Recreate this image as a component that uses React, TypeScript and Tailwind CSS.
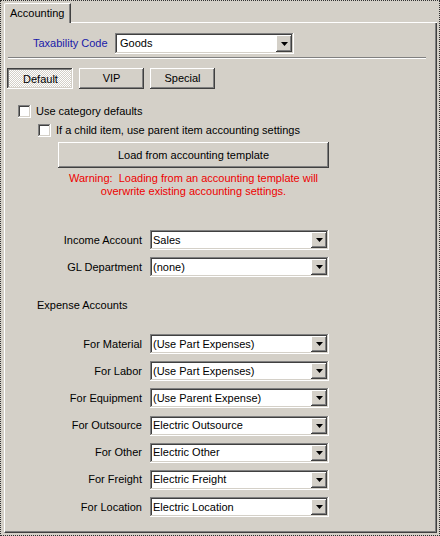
import React from "react";

const raised =
  "shadow-[inset_-1px_-1px_#404040,inset_1px_1px_#ffffff,inset_-2px_-2px_#808080,inset_2px_2px_#d4d0c8]";
const sunken =
  "shadow-[inset_-1px_-1px_#ffffff,inset_1px_1px_#808080,inset_-2px_-2px_#d4d0c8,inset_2px_2px_#404040]";

interface ComboProps {
  value: string;
  tall?: boolean;
}

const Combo: React.FC<ComboProps> = ({ value, tall }) => {
  return (
    <div
      className={`${sunken} bg-white flex items-stretch p-[2px] w-[179px] ${
        tall ? "h-[21px]" : "h-[20px]"
      }`}
    >
      <div className={`flex-1 flex items-center ${tall ? "pl-[3px]" : "pl-[1px]"} leading-none`}>
        {value}
      </div>
      {/* drop arrow */}
      <div className={`${raised} bg-[#d4d0c8] w-[16px] flex items-center justify-center`}>
        <svg width="7" height="4" viewBox="0 0 7 4">
          <polygon points="0,0 7,0 3.5,4" fill="#000" />
        </svg>
      </div>
    </div>
  );
};

const Check: React.FC<{ label: string; className: string }> = ({ label, className }) => (
  <div className={`flex items-center gap-[5px] ${className}`}>
    <div className={`${sunken} bg-white w-[13px] h-[13px]`} />
    <span className="leading-none">{label}</span>
  </div>
);

const Row: React.FC<{ label: string; value: string }> = ({ label, value }) => (
  <div className="flex items-center gap-[8px]">
    <div className="w-[137px] text-right leading-none">{label}</div>
    <Combo value={value} />
  </div>
);

const expenses = [
  ["For Material", "(Use Part Expenses)"],
  ["For Labor", "(Use Part Expenses)"],
  ["For Equipment", "(Use Parent Expense)"],
  ["For Outsource", "Electric Outsource"],
  ["For Other", "Electric Other"],
  ["For Freight", "Electric Freight"],
  ["For Location", "Electric Location"],
];

export default function App() {
  return (
    <div className="w-[440px] h-[536px] bg-[#d4d0c8] border border-dotted border-[#303030] pl-[3px] pt-[2px] text-[11px] text-black font-['Liberation_Sans',Arial,sans-serif]">
      {/* tab strip */}
      <div className="flex h-[20px] w-[433px]">
        <div className="h-full pl-[5px] pr-[6px] flex items-center border-t border-l border-white shadow-[inset_-1px_0_#808080] border-r border-r-[#404040] rounded-tl-[2px]">
          Accounting
        </div>
        <div className="flex-1 border-b border-white" />
      </div>

      {/* panel */}
      <div className="w-[433px] h-[510px] border-l border-white border-r border-r-[#404040] border-b border-b-[#404040] shadow-[inset_-1px_-1px_#808080] flex flex-col">
        {/* taxability */}
        <div className="flex items-center mt-[10px] pl-[28px]">
          <div className="w-[82px] text-[#1a1aa8] leading-none">Taxability Code</div>
          <Combo value="Goods" tall />
        </div>

        <div className="mt-[3px] ml-[3px] w-[418px] h-[2px] border-t border-[#808080] border-b border-b-white" />

        {/* toggle buttons */}
        <div className="flex gap-[6px] mt-[9px] pl-[2px]">
          <div className="shadow-[inset_-1px_-1px_#ffffff,inset_1px_1px_#404040,inset_-2px_-2px_#d4d0c8,inset_2px_2px_#808080] bg-[repeating-conic-gradient(#ffffff_0%_25%,#d4d0c8_0%_50%)] bg-[length:2px_2px] w-[66px] h-[21px] flex items-center justify-center pt-[1px] pl-[1px]">
            Default
          </div>
          <div className={`${raised} w-[65px] h-[21px] flex items-center justify-center`}>VIP</div>
          <div className={`${raised} w-[65px] h-[21px] flex items-center justify-center`}>Special</div>
        </div>

        <Check label="Use category defaults" className="mt-[16px] pl-[13px]" />
        <Check
          label="If a child item, use parent item accounting settings"
          className="mt-[6px] pl-[33px]"
        />

        {/* template */}
        <div className="ml-[53px] w-[271px] mt-[5px]">
          <div className={`${raised} h-[26px] flex items-center justify-center`}>
            Load from accounting template
          </div>
          <div className="mt-[4px] text-center text-[#ee0000] leading-[13px]">
            Warning:&nbsp; Loading from an accounting template will
            <br />
            overwrite existing accounting settings.
          </div>
        </div>

        <div className="mt-[32px] flex flex-col gap-[7px]">
          <Row label="Income Account" value="Sales" />
          <Row label="GL Department" value="(none)" />
        </div>

        <div className="mt-[22px] pl-[32px] leading-[13px]">Expense Accounts</div>

        <div className="mt-[22px] flex flex-col gap-[7.2px]">
          {expenses.map(([label, value]) => (
            <Row key={label} label={label} value={value} />
          ))}
        </div>
      </div>
    </div>
  );
}
